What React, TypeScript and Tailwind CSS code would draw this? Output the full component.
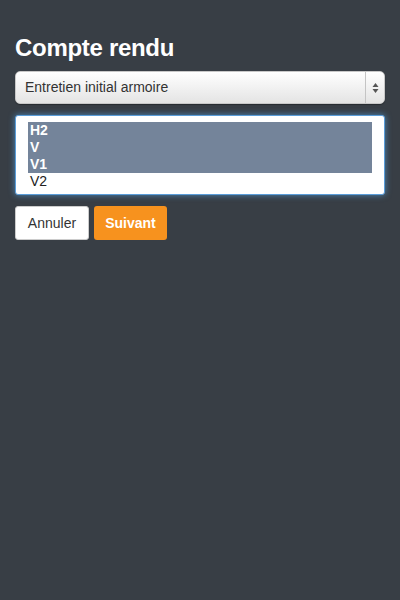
import React from "react";

export default function App() {
  const items = [
    { t: "H2", s: true },
    { t: "V", s: true },
    { t: "V1", s: true },
    { t: "V2", s: false },
  ];
  return (
    <div
      className="w-[400px] h-[600px] bg-[#383e45] px-[15px] pt-[34px]"
      style={{ fontFamily: "'Liberation Sans', Arial, sans-serif" }}
    >
      <h1 className="text-[24px] leading-[28px] font-bold text-white tracking-[-0.3px]">Compte rendu</h1>
      <div className="mt-[9px] h-[33px] flex rounded-[5px] border border-[#c8c8c8] bg-gradient-to-b from-[#ffffff] to-[#e4e4e4] shadow-[0_1px_1px_rgba(0,0,0,0.3)]">
        <div className="flex-1 flex items-center pl-[9px] text-[14px] text-[#333]">Entretien initial armoire</div>
        <div className="w-[19px] border-l border-[#c4c4c4] flex flex-col items-center justify-center gap-[1px]">
          <svg width="7" height="12" viewBox="0 0 7 12">
            <polygon points="3.5,1 6.5,5 0.5,5" fill="#555" />
            <polygon points="0.5,7 6.5,7 3.5,11" fill="#555" />
          </svg>
        </div>
      </div>
      <div className="mt-[11px] h-[80px] rounded-[3px] bg-white border border-[#5b9dd9] shadow-[0_0_6px_rgba(82,168,236,0.7)] pt-[6px] pl-[12px] pr-[12px]">
        {items.map((it) => (
          <div
            key={it.t}
            className={
              "h-[17px] leading-[17px] text-[14px] pl-[2px] " +
              (it.s ? "bg-[#74849a] text-white font-semibold" : "text-[#222]")
            }
          >
            {it.t}
          </div>
        ))}
      </div>
      <div className="mt-[11px] flex gap-[5px]">
        <button className="h-[34px] w-[74px] rounded-[3px] bg-white border border-[#ccc] text-[14px] text-[#333]">Annuler</button>
        <button className="h-[34px] w-[73px] rounded-[3px] bg-[#f7921e] text-[14px] font-bold text-white">Suivant</button>
      </div>
    </div>
  );
}
